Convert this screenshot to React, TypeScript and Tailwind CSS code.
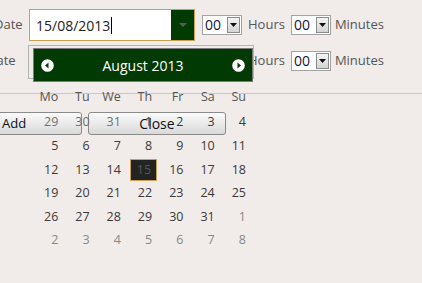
import React from "react";

const GREEN = "#013a02";

function Select00() {
  return (
    <div className="flex h-[20px] w-[40px] border border-[#a3a3a3] bg-white">
      <div className="flex flex-1 items-center pl-[2px] text-[14px] leading-none text-[#141436]">00</div>
      <div className="m-[1px] flex w-[13px] items-center justify-center border border-[#8c8c8c] bg-gradient-to-b from-[#f4f4f4] to-[#d4d4d4]">
        <svg width="7" height="4" viewBox="0 0 7 4">
          <polygon points="0,0 7,0 3.5,4" fill="#111" />
        </svg>
      </div>
    </div>
  );
}

function Row({ children, shifted }: { children: React.ReactNode; shifted?: boolean }) {
  return (
    <div className="flex h-[32px] items-center">
      <span
        className={
          shifted
            ? "ml-[-13px] w-[42px] shrink-0 text-[13px] text-[#555]"
            : "ml-[-6px] w-[35px] shrink-0 text-[13px] text-[#555]"
        }
      >
        Date
      </span>
      {children}
      <div className="ml-[7px]">
        <Select00 />
      </div>
      <span className="ml-[6px] text-[13px] text-[#555]">Hours</span>
      <div className="ml-[6px]">
        <Select00 />
      </div>
      <span className="ml-[4px] text-[13px] text-[#555]">Minutes</span>
    </div>
  );
}

const weeks: { d: number; t: "prev" | "cur" | "next" | "sel" }[][] = [
  [29, 30, 31].map((d) => ({ d, t: "prev" as const })).concat([1, 2, 3, 4].map((d) => ({ d, t: "cur" as const }))),
  [5, 6, 7, 8, 9, 10, 11].map((d) => ({ d, t: "cur" as const })),
  [12, 13, 14, 15, 16, 17, 18].map((d) => ({ d, t: d === 15 ? ("sel" as const) : ("cur" as const) })),
  [19, 20, 21, 22, 23, 24, 25].map((d) => ({ d, t: "cur" as const })),
  [26, 27, 28, 29, 30, 31].map((d) => ({ d, t: "cur" as const })).concat([{ d: 1, t: "next" as const }]),
  [2, 3, 4, 5, 6, 7, 8].map((d) => ({ d, t: "next" as const })),
];

function Arrow({ dir }: { dir: "l" | "r" }) {
  return (
    <svg width="13" height="13" viewBox="0 0 13 13">
      <circle cx="6.5" cy="6.5" r="6.3" fill="#fff" />
      {dir === "l" ? (
        <polygon points="4,6.5 7.5,3.5 7.5,9.5" fill={GREEN} />
      ) : (
        <polygon points="9,6.5 5.5,3.5 5.5,9.5" fill={GREEN} />
      )}
    </svg>
  );
}

export default function App() {
  return (
    <div
      className="relative h-[283px] w-[422px] overflow-hidden bg-[#f1ece9]"
      style={{ fontFamily: '"Open Sans", "Noto Sans", sans-serif' }}
    >
      <div className="pt-[9px]">
        <Row>
          <div className="flex h-[32px] w-[166px] shrink-0 border border-[#c8a04f] bg-white">
            <div className="flex flex-1 items-center pl-[6px] text-[14px] text-[#222]">
              <span>15/08/2013</span>
              <span className="ml-[1px] h-[17px] w-[1px] bg-black" />
            </div>
            <div className="flex w-[23px] items-center justify-center bg-[#013a02]">
              <svg width="8" height="4" viewBox="0 0 8 4">
                <polygon points="0,0 8,0 4,4" fill="#5a5a5a" />
              </svg>
            </div>
          </div>
        </Row>
        <div className="mt-[4px]">
          <Row shifted>
            <div className="h-[32px] w-[166px] shrink-0 border border-[#aaa] bg-white" />
          </Row>
        </div>
        <div className="mt-[16px] h-[1px] bg-[#c9c6c4]" />
        <div className="mt-[18px] flex h-[23px]">
          <button className="ml-[-8px] w-[90px] rounded-[3px] border border-[#8a8a8a] bg-gradient-to-b from-[#fbfbfb] to-[#d9d9d9] pl-[9px] text-left text-[13px] text-[#111]">
            Add
          </button>
          <button className="ml-[6px] w-[138px] rounded-[3px] border border-[#8a8a8a] bg-gradient-to-b from-[#fbfbfb] to-[#d9d9d9] text-[14px] text-[#111]">
            Close
          </button>
        </div>
      </div>

      {/* datepicker popup */}
      <div className="absolute left-[28px] top-[45px] h-[34px] w-[226px] border border-[#b4b4b4] bg-[#f1ece9]" />
      <div
        className="absolute left-[33px] top-[48px] flex h-[34px] w-[220px] items-center justify-between border border-[#7a7a7a] px-[7px] text-[14px] text-white"
        style={{ backgroundColor: GREEN }}
      >
        <Arrow dir="l" />
        <span>August 2013</span>
        <Arrow dir="r" />
      </div>
      <div className="absolute left-[33px] top-[86px] w-[219px] text-[12.5px]">
        <div className="grid h-[22px] grid-cols-7 items-center">
          {["Mo", "Tu", "We", "Th", "Fr", "Sa", "Su"].map((w) => (
            <div key={w} className="pr-[6px] text-right text-[#555]">
              {w}
            </div>
          ))}
        </div>
        <div className="mt-[3px]">
          {weeks.map((wk, i) => (
            <div key={i} className="grid h-[23.6px] grid-cols-7 items-center">
              {wk.map((c, j) =>
                c.t === "sel" ? (
                  <div key={j} className="ml-[3px] mr-[1px] flex h-[22px] items-center justify-end border border-[#c8a04f] bg-[#232323] pr-[5px] text-[#555]">
                    {c.d}
                  </div>
                ) : (
                  <div
                    key={j}
                    className={
                      "pr-[6px] text-right " +
                      (c.t === "cur" ? "text-[#3a3a3a]" : c.t === "prev" ? "text-[#707070]" : "text-[#888]")
                    }
                  >
                    {c.d}
                  </div>
                )
              )}
            </div>
          ))}
        </div>
      </div>
    </div>
  );
}
